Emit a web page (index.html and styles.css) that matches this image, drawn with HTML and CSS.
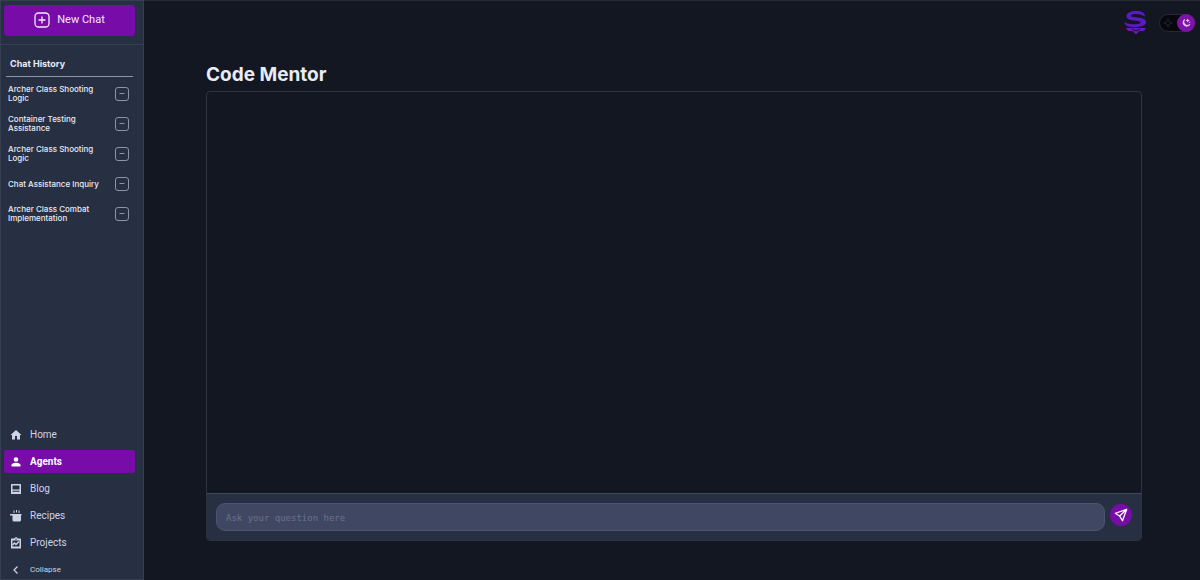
FILE: index.html
```html
<!DOCTYPE html>
<html lang="en">
<head>
    <meta charset="UTF-8">
    <meta name="viewport" content="width=device-width, initial-scale=1.0">
    <title>Code Mentor</title>
    <link rel="stylesheet" href="styles.css">
</head>
<body>
    <aside class="sidebar">
        <div class="sidebar-top">
            <button type="button" class="new-chat">
                <svg class="new-chat-icon" viewBox="0 0 16 16" fill="none" stroke="currentColor" stroke-width="1.3" stroke-linecap="round">
                    <rect x="1" y="1" width="14" height="14" rx="3.5"/>
                    <path d="M8 5v6M5 8h6"/>
                </svg>
                New Chat
            </button>
        </div>

        <section class="history">
            <h2 class="history-title">Chat History</h2>
            <ul class="history-list">
                <li class="history-item">
                    <a href="#">Archer Class Shooting Logic</a>
                    <button type="button" class="remove-btn" aria-label="Remove chat">
                        <svg viewBox="0 0 14 14" fill="none" stroke="currentColor"><rect x="0.5" y="0.5" width="13" height="13" rx="2.5"/><path d="M4.5 6.5h5"/></svg>
                    </button>
                </li>
                <li class="history-item">
                    <a href="#">Container Testing Assistance</a>
                    <button type="button" class="remove-btn" aria-label="Remove chat">
                        <svg viewBox="0 0 14 14" fill="none" stroke="currentColor"><rect x="0.5" y="0.5" width="13" height="13" rx="2.5"/><path d="M4.5 6.5h5"/></svg>
                    </button>
                </li>
                <li class="history-item">
                    <a href="#">Archer Class Shooting Logic</a>
                    <button type="button" class="remove-btn" aria-label="Remove chat">
                        <svg viewBox="0 0 14 14" fill="none" stroke="currentColor"><rect x="0.5" y="0.5" width="13" height="13" rx="2.5"/><path d="M4.5 6.5h5"/></svg>
                    </button>
                </li>
                <li class="history-item">
                    <a href="#">Chat Assistance Inquiry</a>
                    <button type="button" class="remove-btn" aria-label="Remove chat">
                        <svg viewBox="0 0 14 14" fill="none" stroke="currentColor"><rect x="0.5" y="0.5" width="13" height="13" rx="2.5"/><path d="M4.5 6.5h5"/></svg>
                    </button>
                </li>
                <li class="history-item">
                    <a href="#">Archer Class Combat Implementation</a>
                    <button type="button" class="remove-btn" aria-label="Remove chat">
                        <svg viewBox="0 0 14 14" fill="none" stroke="currentColor"><rect x="0.5" y="0.5" width="13" height="13" rx="2.5"/><path d="M4.5 6.5h5"/></svg>
                    </button>
                </li>
            </ul>
        </section>

        <nav class="menu">
            <a href="#" class="menu-link">
                <svg viewBox="0 0 24 24" fill="currentColor"><path d="M10 21v-7h4v7h6v-9h3L12 2 1 12h3v9z"/></svg>
                Home
            </a>
            <a href="#" class="menu-link active">
                <svg viewBox="0 0 24 24" fill="currentColor"><circle cx="12" cy="7" r="4.6"/><path d="M3 21v-3c0-3 6-4.600 9-4.600s9 1.600 9 4.600v3z"/></svg>
                Agents
            </a>
            <a href="#" class="menu-link">
                <svg viewBox="0 0 24 24" fill="currentColor"><path fill-rule="evenodd" d="M3 2h18a1 1 0 0 1 1 1v18a1 1 0 0 1-1 1H3a1 1 0 0 1-1-1V3a1 1 0 0 1 1-1zm2 3v8h14V5zm0 10.500v2h14v-2z"/></svg>
                Blog
            </a>
            <a href="#" class="menu-link">
                <svg viewBox="0 0 24 24" fill="currentColor"><path d="M0 8h23v3h-1v9a3 3 0 0 1-3 3H8a3 3 0 0 1-3-3v-9H0z"/><path d="M8 1v5M13 0v5M18 1v5" stroke="currentColor" stroke-width="2"/></svg>
                Recipes
            </a>
            <a href="#" class="menu-link">
                <svg viewBox="0 0 24 24" fill="currentColor"><path fill-rule="evenodd" d="M3 3h5.500a3.700 3.700 0 0 1 7 0H21a1 1 0 0 1 1 1v18a1 1 0 0 1-1 1H3a1 1 0 0 1-1-1V4a1 1 0 0 1 1-1zm2 4v12h14V7zM12 3a1.300 1.300 0 1 0 0 2.600A1.300 1.300 0 0 0 12 3z"/><path d="M5 16l4-4 3 3 6-6" fill="none" stroke="currentColor" stroke-width="3"/></svg>
                Projects
            </a>
            <button type="button" class="menu-link collapse">
                <svg viewBox="0 0 24 24" fill="none" stroke="currentColor" stroke-width="2.500"><path d="M15 5l-7 7 7 7"/></svg>
                Collapse
            </button>
        </nav>
    </aside>

    <div class="page">
        <header class="topbar">
            <a href="#" class="logo" aria-label="Home page">
                <svg viewBox="0 0 24 24">
                    <path d="M21 5.500C21 1.500 17 0 12 0 6.500 0 2.500 2 2.500 5c0 3 3 4 7.500 4.500 4 .500 6.500.800 6.500 2 0 1.300-3 1.800-6.500 1.800-4 0-7-.800-10-2.300l2 3.500c2.500 1.200 5.500 1.500 9 1.500 6.500 0 11-1.500 11-5 0-2.800-3-4-8.500-4.500C9.500 6.100 7 6 7 4.800 7 3.600 9 3 12 3c3.500 0 6 .800 9 2.500z" fill="#5b1bc4"/>
                    <path d="M2 17h20l-2 3h-4.500L12 23.500 8.500 20H4z" fill="#6a18b8"/>
                    <path d="M8 18.200l4 1.600 4-1.600" fill="none" stroke="#131722"/>
                </svg>
            </a>
            <label class="theme-switch">
                <input type="checkbox" aria-label="Dark theme" checked>
                <svg class="sun" viewBox="0 0 12 12" fill="none" stroke="currentColor"><path d="M6 1l1.500 3.500L11 6 7.500 7.500 6 11 4.500 7.500 1 6l3.500-1.500z"/></svg>
                <span class="knob">
                    <svg viewBox="0 0 12 12" fill="none" stroke="currentColor" stroke-width="1.300" stroke-linecap="round"><path d="M4.500 2a4.200 4.200 0 1 0 6 5.500 4 4 0 0 1-6-5.500z"/><path d="M8 1.500v3M6.500 3h3M10.500 5v.500"/></svg>
                </span>
            </label>
        </header>

        <main class="chat">
            <h1 class="chat-title">Code Mentor</h1>
            <div class="chat-box">
                <div class="messages"></div>
                <form class="ask-form">
                    <input type="text" class="ask-input" placeholder="Ask your question here" aria-label="Your question">
                    <button type="submit" class="send-btn" aria-label="Send">
                        <svg viewBox="0 0 16 16" fill="none" stroke="currentColor" stroke-width="1.5" stroke-linejoin="round"><path d="M14.500 1.500L1.500 6l5 3.200 3.200 5.300zM14.500 1.500l-8 7.700"/></svg>
                    </button>
                </form>
            </div>
        </main>
    </div>
</body>
</html>
```

FILE: styles.css
```css
* {
    box-sizing: border-box;
}

body {
    margin: 0;
    min-height: 100vh;
    display: flex;
    font-family: Inter, "Liberation Sans", sans-serif;
    background-color: #131722;
    color: #e8ebf5;
}

button {
    font-family: inherit;
    border: none;
    padding: 0;
    cursor: pointer;
}

a {
    color: inherit;
    text-decoration: none;
}

/* Sidebar */
.sidebar {
    width: 12%;
    min-width: 144px;
    display: flex;
    flex-direction: column;
    background-color: #272f42;
    border: 1px solid #363f50;
}

.sidebar-top {
    padding: 4px 8px 8px 3px;
    border-bottom: 1px solid #363f50;
}

.new-chat {
    width: 100%;
    height: 31px;
    padding-bottom: 2px;
    display: flex;
    align-items: center;
    justify-content: center;
    gap: 7px;
    border-radius: 4px;
    background-color: #770ca8;
    color: #f6e9fb;
    font-family: Roboto, "Liberation Sans", sans-serif;
    font-size: 11px;
}

.new-chat-icon {
    width: 16px;
    height: 16px;
}

.history {
    padding: 12px 10px 0 5px;
}

.history-title {
    margin: 0 0 7px;
    padding: 0 4px 6px;
    border-bottom: 1px solid #8b93a5;
    font-size: 9px;
    line-height: 13px;
    font-weight: 700;
}

.history-list {
    margin: 0;
    padding: 0;
    list-style: none;
    display: flex;
    flex-direction: column;
    gap: 10px;
}

.history-item {
    height: 20px;
    padding: 0 4px 0 2px;
    display: flex;
    align-items: center;
    justify-content: space-between;
    gap: 12px;
    font-size: 8px;
    line-height: 9px;
    font-weight: 500;
}

.remove-btn {
    flex: none;
    width: 14px;
    height: 14px;
    background: none;
    color: #8c94a6;
}

.remove-btn svg {
    display: block;
}

.menu {
    margin-top: auto;
    padding: 0 8px 0 3px;
    display: flex;
    flex-direction: column;
    gap: 4px;
}

.menu-link {
    height: 23px;
    padding: 0 6px;
    display: flex;
    align-items: center;
    gap: 8px;
    border-radius: 2px;
    background: none;
    color: #ced3e6;
    font-family: Roboto, "Liberation Sans", sans-serif;
    font-size: 10px;
}

.menu-link svg {
    width: 12px;
    height: 12px;
}

.menu-link.active {
    background-color: #770ca8;
    color: #ffffff;
    font-weight: 700;
}

.menu-link.collapse {
    height: 19px;
    margin-top: 2px;
    font-size: 8px;
}

/* Page */
.page {
    flex: 1;
    display: flex;
    flex-direction: column;
    border-top: 1px solid #232a38;
}

.topbar {
    height: 44px;
    padding: 0 4px;
    display: flex;
    align-items: center;
    justify-content: flex-end;
    gap: 11px;
}

.logo svg {
    display: block;
    width: 24px;
    height: 24px;
}

.theme-switch {
    width: 37px;
    height: 18px;
    padding-left: 3px;
    display: flex;
    align-items: center;
    justify-content: space-between;
    border: 1px solid #272a34;
    border-radius: 9px;
    background-color: #07080d;
    cursor: pointer;
}

.theme-switch input {
    position: absolute;
    opacity: 0;
}

.sun {
    width: 10px;
    height: 10px;
    color: #262933;
}

.knob {
    width: 18px;
    height: 18px;
    display: flex;
    align-items: center;
    justify-content: center;
    border-radius: 50%;
    background-color: #7d14aa;
    color: #e6c3f3;
}

.knob svg {
    width: 10px;
    height: 10px;
}

.chat {
    flex: 1;
    display: flex;
    flex-direction: column;
    padding: 18px 58px 39px 62px;
}

.chat-title {
    margin: 0 0 5px;
    font-size: 19px;
    line-height: 23px;
    font-weight: 700;
}

.chat-box {
    flex: 1;
    display: flex;
    flex-direction: column;
    border: 1px solid #2c3442;
    border-radius: 4px;
    overflow: hidden;
}

.messages {
    flex: 1;
}

.ask-form {
    display: flex;
    align-items: center;
    gap: 5px;
    padding: 9px;
    border-top: 1px solid #414959;
    background-color: #272f42;
}

.ask-input {
    flex: 1;
    height: 28px;
    padding: 2px 9px 0;
    border: 1px solid #4c5570;
    border-radius: 9px;
    background-color: #3f4763;
    color: #e8ebf5;
    font-family: "DejaVu Sans Mono", "Liberation Mono", monospace;
    font-size: 9px;
}

.ask-input::placeholder {
    color: #6d7385;
}

.send-btn {
    width: 22px;
    height: 22px;
    margin-bottom: 4px;
    display: flex;
    align-items: center;
    justify-content: center;
    border-radius: 50%;
    background-color: #770ca8;
    color: #ffffff;
}

.send-btn svg {
    width: 14px;
    height: 14px;
}
```
